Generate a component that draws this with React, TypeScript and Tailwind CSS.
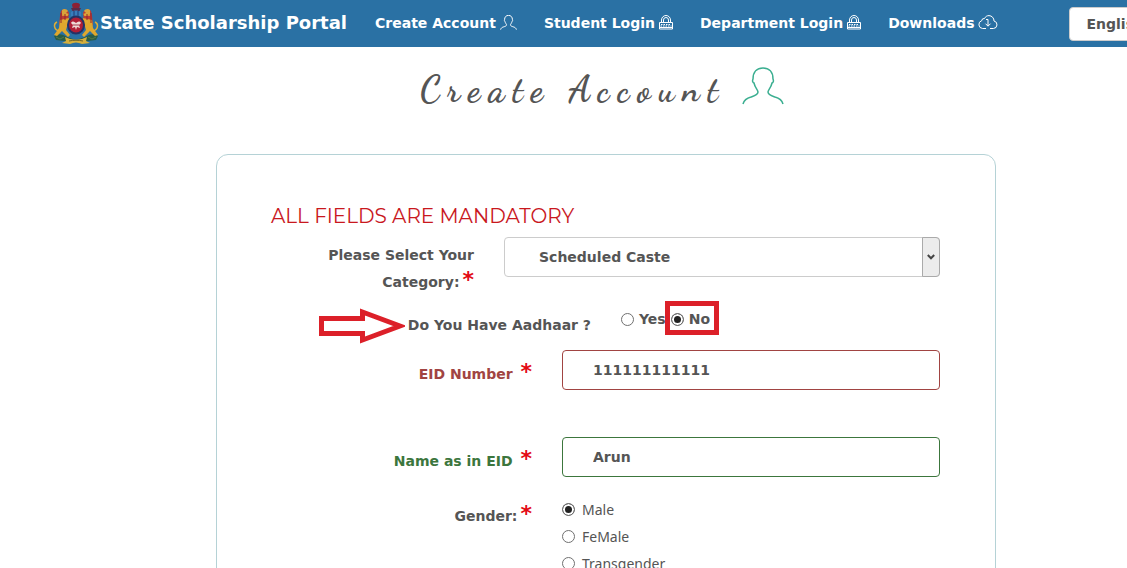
import type { ReactNode } from "react";

const UserIcon = ({ className }: { className: string }) => (
    <svg viewBox="0 0 42 38" fill="none" stroke="currentColor" className={className} aria-hidden="true">
        <path d="M1 37c1-4 4-6 8-7 3-1 7-2 7-5 0-2-3-4-4-9-1 0-2-2-1-4 0-7 4-11 10-11s10 4 10 11c1 2 0 4-1 4-1 5-4 7-4 9 0 3 4 4 7 5 4 1 7 3 8 7" vectorEffect="non-scaling-stroke" />
    </svg>
);

const LockIcon = () => (
    <svg viewBox="0 0 14 15" fill="none" stroke="currentColor" className="w-3.5 h-[15px]" aria-hidden="true">
        <path d="M2.5 7V5a4.5 4.5 0 0 1 9 0v2M4.5 7V5a2.5 2.5 0 0 1 5 0v2" />
        <path d="M.5 7.5h13v6.500H.5zM.5 12.500h13" />
        <path d="M2 9.500h10M1.500 11h11" strokeDasharray="1.500 1" />
    </svg>
);

const CloudIcon = () => (
    <svg viewBox="0 0 20 15" fill="none" stroke="currentColor" className="w-5 h-[15px]" aria-hidden="true">
        <path d="M8 13.500H4.500a4 4 0 0 1-.8-7.800 2.500 2.500 0 0 1 2.800-2.200C7.500 1.500 9 .6 11 .6a5.200 5.200 0 0 1 5 5.400 3.800 3.800 0 0 1-.5 7.500H12" />
        <path d="M8 4.500h2V11M7.500 8.700 10 11.200l2.500-2.500" />
    </svg>
);

const Emblem = () => (
    <svg viewBox="0 0 48 44" className="w-12 h-11 shrink-0" aria-hidden="true">
        <path d="M2 35c4-3 9-2 13 1l9 3 9-3c4-3 9-4 13-1l-2 4-8 1-12 1-12-1-8-1z" fill="#285c46" />
        <path d="M4 36l4 2 4-2m24 0 4 2 4-2" stroke="#527a48" strokeWidth="1" fill="none" />
        <g id="lion">
            <path d="M9 10c3-3 7-1 8 2l-1 10-2 5-7-3 1-9z" fill="#bd3c32" />
            <path d="M10 9c2-2 5-1 6 1l-2 2 3 1-3 2-4-2z" fill="#d7a43b" />
            <path d="M8 19l9-2 3 2-4 3-2 7 4 5-2 2-6-6-5 5-3-1 5-7z" fill="#dfa72d" />
            <path d="M7 30c-5-1-6-7-2-9M10 14h6M12 21l5-1" stroke="#e0ad35" strokeWidth="1.500" fill="none" />
            <path d="M9 12v10M13 13v6" stroke="#8f2430" strokeWidth="1" />
        </g>
        <use href="#lion" transform="matrix(-1 0 0 1 48 0)" />
        <path d="M20 4c0-3 8-3 8 0l-1 4h-6z" fill="#8c2034" />
        <path d="M19 7h10l-2 4h-6z" fill="#592a49" />
        <path d="M19 11c3-2 7-2 10 0v4H19z" fill="#377dbc" />
        <path d="M22 10v6M26 10v6" stroke="#203b73" />
        <ellipse cx="24" cy="24" rx="9" ry="9.500" fill="#243265" />
        <ellipse cx="24" cy="24" rx="7" ry="7.500" fill="#b01e36" />
        <path d="M19 22c1-2 3-2 5 0 2-2 4-2 5 0l-2 2 1 3-3-1-1 3-1-3-3 1 1-3z" fill="#efdad6" />
        <path d="M21 24h6" stroke="#a43a4c" />
        <path d="M13 36l5 2c4 1 8 1 12 0l5-2-1 4 4 2-8 1c-4-2-8-2-12 0l-8-1 4-2z" fill="#d5af3c" />
        <path d="M17 40c5-1 9-1 14 0" stroke="#6f6326" fill="none" />
    </svg>
);

const NavLink = ({ label, icon }: { label: string; icon: ReactNode }) => (
    <a href="#" className="flex shrink-0 items-center gap-1 text-sm font-bold whitespace-nowrap">
        {label}
        {icon}
    </a>
);

const Star = () => <span className="pl-[3px] text-[22px] leading-none text-[#e30b13]">*</span>;

const radioClass =
    "size-[13px] shrink-0 appearance-none rounded-full border border-[#707070] bg-white checked:bg-[#222] checked:shadow-[inset_0_0_0_2px_white]";

const fieldClass = "h-10 w-full min-w-0 rounded border bg-white px-[30px] text-sm font-bold text-[#555]";

const App = () => {
    return (
        <div className="h-screen overflow-hidden bg-white font-['DejaVu_Sans',Verdana,sans-serif] text-sm text-[#555]">
            <nav className="flex h-[47px] items-center overflow-hidden bg-[#2a71a4] pl-[52px] text-white">
                <a href="#" className="flex shrink-0 items-center pb-0.5 text-lg font-bold whitespace-nowrap">
                    <Emblem />
                    State Scholarship Portal
                </a>
                <div className="ml-7 flex shrink-0 gap-[27px] pb-0.5">
                    <NavLink label="Create Account" icon={<UserIcon className="w-[17px] h-[15px]" />} />
                    <NavLink label="Student Login" icon={<LockIcon />} />
                    <NavLink label="Department Login" icon={<LockIcon />} />
                    <NavLink label="Downloads" icon={<CloudIcon />} />
                </div>
                <select aria-label="Language" className="ml-[71px] h-[34px] w-[120px] shrink-0 appearance-none rounded border border-[#ccc] bg-white pl-4 text-sm font-bold text-[#555]">
                    <option>English</option>
                    <option>Kannada</option>
                </select>
            </nav>

            <main className="pl-[85px]">
                <h1 className="flex h-[107px] items-start justify-center gap-4 pt-5 pr-2 font-['Dancing_Script',cursive] text-4xl leading-[46px] font-bold text-[#555]">
                    <span className="tracking-[8px]">Create Account</span>
                    <UserIcon className="h-[38px] w-[42px] stroke-[1.5] text-[#3aae90]" />
                </h1>

                <form className="mx-auto w-full max-w-[780px] rounded-xl border border-[#b5d2d6] pt-[49px] pr-[55px] pb-14 pl-[54px]">
                    <h2 className="mb-[9px] font-['Montserrat','Inter',sans-serif] text-xl leading-6 font-normal text-[#c9181e]">
                        ALL FIELDS ARE MANDATORY
                    </h2>

                    <div className="flex h-[63px] gap-[30px]">
                        <label htmlFor="category" className="w-[203px] shrink-0 pt-[5px] text-right leading-[27px] font-bold">
                            Please Select Your Category:<Star />
                        </label>
                        <div className="relative h-10 flex-1">
                            <select id="category" className={`${fieldClass} appearance-none border-[#ccc] pl-[34px]`}>
                                <option>Scheduled Caste</option>
                            </select>
                            <span className="pointer-events-none absolute inset-y-0 right-0 flex w-[18px] items-center justify-center rounded-r-sm border border-[#aaa] bg-[#ececec]">
                                <svg viewBox="0 0 8 6" className="h-1.5 w-2" fill="none" stroke="#444" strokeWidth="2" aria-hidden="true">
                                    <path d="M.8 1 4 4.300 7.200 1" />
                                </svg>
                            </span>
                        </div>
                    </div>

                    <div role="radiogroup" aria-labelledby="aadhaar-label" className="relative flex h-[50px] gap-[30px] font-bold">
                        <span id="aadhaar-label" className="w-80 shrink-0 pt-3 text-right leading-[27px]">Do You Have Aadhaar ?</span>
                        <div className="flex h-[38px] items-center gap-[5px]">
                            <label className="flex items-center gap-[5px]">
                                <input type="radio" name="aadhaar" className={radioClass} />
                                Yes
                            </label>
                            <label className="flex items-center gap-[5px]">
                                <input type="radio" name="aadhaar" defaultChecked className={radioClass} />
                                No
                            </label>
                        </div>
                        <span className="pointer-events-none absolute top-px left-[394px] h-[34px] w-[54px] border-[5px] border-[#dc2029]" />
                        <svg viewBox="0 0 86 36" className="absolute top-2 left-12 h-9 w-[86px]" fill="none" stroke="#dc2029" strokeWidth="5" aria-hidden="true">
                            <path d="M2.500 10.500H43.500V4L81 18 43.500 32V25.500H2.500z" />
                        </svg>
                    </div>

                    <div className="flex h-[87px] gap-[30px]">
                        <label htmlFor="eid" className="w-[261px] shrink-0 pt-[11px] text-right leading-[27px] font-bold text-[#a14442]">
                            EID Number <Star />
                        </label>
                        <input id="eid" type="text" defaultValue="111111111111" className={`${fieldClass} border-[#a14442]`} />
                    </div>

                    <div className="flex h-[59px] gap-[30px]">
                        <label htmlFor="name" className="w-[261px] shrink-0 pt-[11px] text-right leading-[27px] font-bold text-[#3c763d]">
                            Name as in EID <Star />
                        </label>
                        <input id="name" type="text" defaultValue="Arun" className={`${fieldClass} border-[#3c763d]`} />
                    </div>

                    <div role="radiogroup" aria-labelledby="gender-label" className="flex gap-[30px]">
                        <span id="gender-label" className="w-[261px] shrink-0 pt-[7px] text-right leading-[27px] font-bold">
                            Gender:<Star />
                        </span>
                        <div className="font-['Noto_Sans','Open_Sans',sans-serif] leading-[27px]">
                            {["Male", "FeMale", "Transgender"].map((gender) => (
                                <label key={gender} className="flex items-center gap-[7px]">
                                    <input type="radio" name="gender" defaultChecked={gender === "Male"} className={radioClass} />
                                    {gender}
                                </label>
                            ))}
                        </div>
                    </div>
                </form>
            </main>
        </div>
    );
};

export default App;
